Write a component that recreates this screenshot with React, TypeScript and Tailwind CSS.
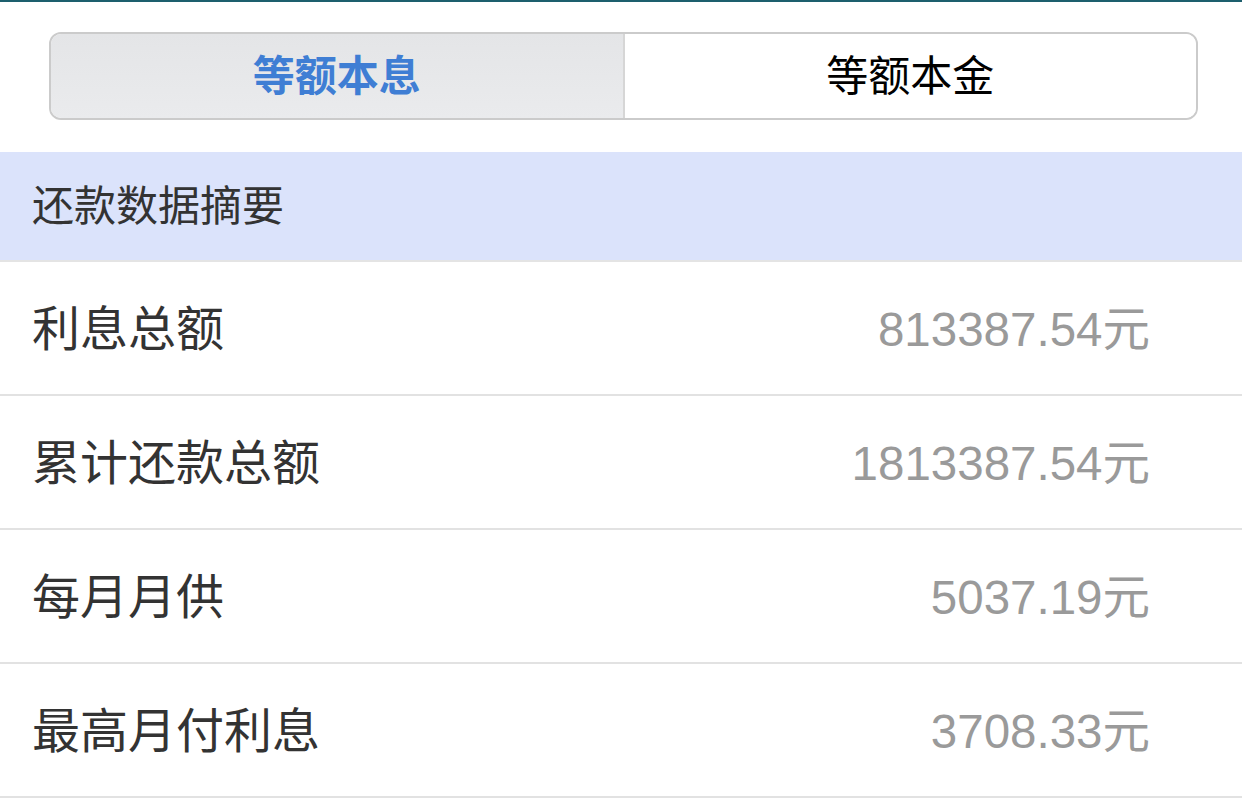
export default function App() {
  const rows = [
    { label: "利息总额", value: "813387.54元" },
    { label: "累计还款总额", value: "1813387.54元" },
    { label: "每月月供", value: "5037.19元" },
    { label: "最高月付利息", value: "3708.33元" },
  ];

  return (
    <div className="w-[1242px] h-[798px] overflow-hidden bg-white font-['Liberation_Sans','Noto_Sans_CJK_SC',sans-serif]">
      <div className="h-[2px] bg-[#1d5f6d]" />

      {/* segmented control */}
      <div className="pl-[49px] pr-[44px] pt-[30px] pb-[32px]">
        <div className="flex h-[88px] rounded-[12px] border-2 border-[#cbcbcb] overflow-hidden">
          <div className="flex-1 flex items-center justify-center bg-gradient-to-b from-[#e4e5e7] to-[#eaebed] border-r-2 border-[#d6d6d6] text-[42px] font-bold text-[#3f7ed4]">
            等额本息
          </div>
          <div className="flex-1 flex items-center justify-center bg-white text-[42px] text-black">
            等额本金
          </div>
        </div>
      </div>

      {/* summary header */}
      <div className="h-[110px] flex items-center px-[32px] bg-[#dbe3fb] border-b-2 border-[#e4e4e4] text-[42px] text-[#333]">
        还款数据摘要
      </div>

      {rows.map((r) => (
        <div key={r.label} className="h-[134px] flex items-center justify-between pl-[32px] pr-[92px] pt-[3px] border-b-2 border-[#e2e2e2]">
          <span className="text-[48px] text-[#333]">{r.label}</span>
          <span className="text-[47.5px] text-[#9a9a9a]">{r.value}</span>
        </div>
      ))}
    </div>
  );
}
